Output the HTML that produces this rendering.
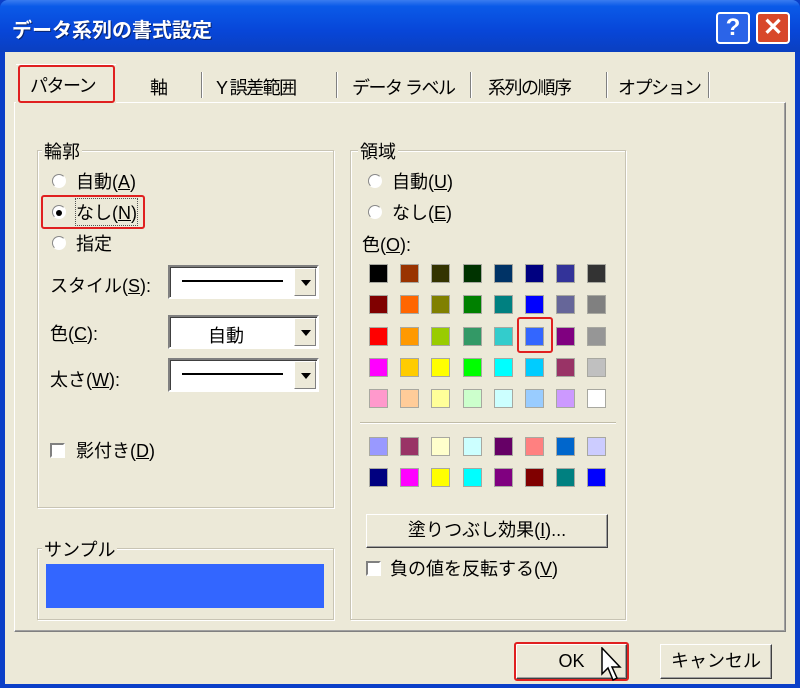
<!DOCTYPE html>
<html><head><meta charset="utf-8"><style>
*{box-sizing:border-box;margin:0;padding:0}
body{width:800px;height:688px;overflow:hidden;background:#0a3fc8;font-family:"Liberation Sans","Noto Sans CJK JP",sans-serif;font-size:18px;color:#000;position:relative}
.a{position:absolute}
#title{left:0;top:0;width:800px;height:52px;background:linear-gradient(#3a7cf0 0,#0a5ae8 12%,#0846d8 60%,#0a3fc0 100%);border-radius:8px 8px 0 0}
#body{left:5px;top:52px;width:790px;height:632px;background:#ece9d8}
.tb{color:#fff;font-weight:bold;font-size:20px;left:12px;top:14px;text-shadow:1px 1px #0a246a}
.btn{width:34px;height:32px;top:12px;border:2px solid #fff;border-radius:4px;color:#fff;font-weight:bold;font-size:24px;text-align:center;line-height:27px}
.grp{border:1px solid #c8c4b4;box-shadow:1px 1px 0 #fff inset,1px 1px 0 #fff}
.lbl{background:#ece9d8;padding:0 2px}
.rad{width:14px;height:14px;border-radius:50%;background:#fff;border:1px solid #a0a0a0;border-color:#888 #fff #fff #888}
.cb{width:15px;height:15px;background:#fff;border:2px solid;border-color:#808080 #fff #fff #808080}
.combo{background:#fff;border:2px solid;border-color:#808080 #fff #fff #808080;box-shadow:inset 1px 1px #404040}
.arr{position:absolute;right:1px;top:1px;bottom:1px;width:22px;background:#ece9d8;border:1px solid;border-color:#fff #808080 #808080 #fff}
.arr:after{content:"";position:absolute;left:6px;top:11px;border:5px solid transparent;border-top:6px solid #000}
.line{position:absolute;left:12px;right:34px;top:13px;height:2px;background:#000}
.pb{background:#ece9d8;border:1px solid;border-color:#fff #404040 #404040 #fff;box-shadow:inset -1px -1px #a0a0a0;text-align:center}
.grid{display:grid;grid-template-columns:repeat(8,31.2px);grid-auto-rows:31.3px}
.grid div{display:flex;align-items:center;justify-content:center}
.grid span{width:19px;height:19px;display:block;border:1px solid #a8a8a0}
.red{border:2px solid #e02020;border-radius:3px}
.sep{width:1px;height:26px;background:#808080;box-shadow:1px 0 #fff}
.tab{letter-spacing:-1.5px}
</style></head><body>
<div id="title" class="a"></div>
<div class="a tb">データ系列の書式設定</div>
<div class="a btn" style="left:716px;background:#2b64e8">?</div>
<div class="a btn" style="left:756px;background:#d8482a">✕</div>
<div id="body" class="a"></div>

<div class="a" style="left:14px;top:102px;width:772px;height:530px;border:1px solid;border-color:#fff #808080 #808080 #fff;box-shadow:inset -1px -1px #a0a0a0"></div>
<div class="a" style="left:16px;top:64px;width:100px;height:40px;background:#ece9d8;border-top:1px solid #fff"></div>
<div class="a red" style="left:18px;top:65px;width:97px;height:38px"></div>
<div class="a tab" style="left:30px;top:72px">パターン</div>
<div class="a tab" style="left:150px;top:74px">軸</div>
<div class="a sep" style="left:201px;top:72px"></div>
<div class="a tab" style="left:216px;top:74px">Y 誤差範囲</div>
<div class="a sep" style="left:336px;top:72px"></div>
<div class="a tab" style="left:352px;top:74px">データ ラベル</div>
<div class="a sep" style="left:470px;top:72px"></div>
<div class="a tab" style="left:488px;top:74px">系列の順序</div>
<div class="a sep" style="left:606px;top:72px"></div>
<div class="a tab" style="left:618px;top:74px">オプション</div>
<div class="a sep" style="left:708px;top:72px"></div>

<div class="a grp" style="left:37px;top:150px;width:297px;height:358px"></div>
<div class="a lbl" style="left:42px;top:138px">輪郭</div>
<div class="a rad" style="left:52px;top:174px"></div><div class="a" style="left:76px;top:168px">自動(<u>A</u>)</div>
<div class="a rad" style="left:52px;top:205px"></div><div class="a" style="left:56px;top:210px;width:6px;height:6px;background:#000;border-radius:50%"></div>
<div class="a" style="left:76px;top:199px;outline:1px dotted #555">なし(<u>N</u>)</div>
<div class="a red" style="left:41px;top:195px;width:104px;height:34px"></div>
<div class="a rad" style="left:52px;top:236px"></div><div class="a" style="left:76px;top:230px">指定</div>
<div class="a" style="left:50px;top:272px">スタイル(<u>S</u>):</div>
<div class="a combo" style="left:168px;top:265px;width:151px;height:34px"><div class="line"></div><div class="arr"></div></div>
<div class="a" style="left:50px;top:320px">色(<u>C</u>):</div>
<div class="a combo" style="left:168px;top:315px;width:151px;height:34px"><div style="position:absolute;left:38px;top:5px">自動</div><div class="arr"></div></div>
<div class="a" style="left:50px;top:366px">太さ(<u>W</u>):</div>
<div class="a combo" style="left:168px;top:358px;width:151px;height:34px"><div class="line"></div><div class="arr"></div></div>
<div class="a cb" style="left:50px;top:443px"></div><div class="a" style="left:76px;top:437px">影付き(<u>D</u>)</div>

<div class="a grp" style="left:37px;top:548px;width:297px;height:72px"></div>
<div class="a lbl" style="left:42px;top:536px">サンプル</div>
<div class="a" style="left:46px;top:564px;width:278px;height:44px;background:#3366ff"></div>

<div class="a grp" style="left:350px;top:150px;width:276px;height:470px"></div>
<div class="a lbl" style="left:358px;top:138px">領域</div>
<div class="a rad" style="left:368px;top:174px"></div><div class="a" style="left:392px;top:168px">自動(<u>U</u>)</div>
<div class="a rad" style="left:368px;top:205px"></div><div class="a" style="left:392px;top:199px">なし(<u>E</u>)</div>
<div class="a" style="left:362px;top:231px">色(<u>O</u>):</div>
<div class="a grid" style="left:363px;top:258px">
<div><span style="background:#000"></span></div><div><span style="background:#993300"></span></div><div><span style="background:#333300"></span></div><div><span style="background:#003300"></span></div><div><span style="background:#003366"></span></div><div><span style="background:#000080"></span></div><div><span style="background:#333399"></span></div><div><span style="background:#333333"></span></div>
<div><span style="background:#800000"></span></div><div><span style="background:#ff6600"></span></div><div><span style="background:#808000"></span></div><div><span style="background:#008000"></span></div><div><span style="background:#008080"></span></div><div><span style="background:#0000ff"></span></div><div><span style="background:#666699"></span></div><div><span style="background:#808080"></span></div>
<div><span style="background:#ff0000"></span></div><div><span style="background:#ff9900"></span></div><div><span style="background:#99cc00"></span></div><div><span style="background:#339966"></span></div><div><span style="background:#33cccc"></span></div><div><span style="background:#3366ff"></span></div><div><span style="background:#800080"></span></div><div><span style="background:#969696"></span></div>
<div><span style="background:#ff00ff"></span></div><div><span style="background:#ffcc00"></span></div><div><span style="background:#ffff00"></span></div><div><span style="background:#00ff00"></span></div><div><span style="background:#00ffff"></span></div><div><span style="background:#00ccff"></span></div><div><span style="background:#993366"></span></div><div><span style="background:#c0c0c0"></span></div>
<div><span style="background:#ff99cc"></span></div><div><span style="background:#ffcc99"></span></div><div><span style="background:#ffff99"></span></div><div><span style="background:#ccffcc"></span></div><div><span style="background:#ccffff"></span></div><div><span style="background:#99ccff"></span></div><div><span style="background:#cc99ff"></span></div><div><span style="background:#ffffff"></span></div>
</div>
<div class="a red" style="left:517px;top:317px;width:36px;height:36px"></div>
<div class="a" style="left:360px;top:422px;width:256px;height:2px;border-top:1px solid #c0bca8;border-bottom:1px solid #fff"></div>
<div class="a grid" style="left:363px;top:431px">
<div><span style="background:#9999ff"></span></div><div><span style="background:#993366"></span></div><div><span style="background:#ffffcc"></span></div><div><span style="background:#ccffff"></span></div><div><span style="background:#660066"></span></div><div><span style="background:#ff8080"></span></div><div><span style="background:#0066cc"></span></div><div><span style="background:#ccccff"></span></div>
<div><span style="background:#000080"></span></div><div><span style="background:#ff00ff"></span></div><div><span style="background:#ffff00"></span></div><div><span style="background:#00ffff"></span></div><div><span style="background:#800080"></span></div><div><span style="background:#800000"></span></div><div><span style="background:#008080"></span></div><div><span style="background:#0000ff"></span></div>
</div>
<div class="a pb" style="left:366px;top:514px;width:242px;height:34px;line-height:31px">塗りつぶし効果(<u>I</u>)...</div>
<div class="a cb" style="left:366px;top:561px"></div><div class="a" style="left:390px;top:555px">負の値を反転する(<u>V</u>)</div>

<div class="a pb" style="left:516px;top:644px;width:111px;height:35px;line-height:33px">OK</div>
<div class="a red" style="left:514px;top:642px;width:115px;height:39px"></div>
<svg class="a" style="left:600px;top:647px" width="26" height="38" viewBox="0 0 26 38"><path d="M2 1 L2 27 L8 21 L13 33 L17 31 L12 20 L20 20 Z" fill="#fff" stroke="#000" stroke-width="1.5"/></svg>
<div class="a pb" style="left:660px;top:644px;width:112px;height:35px;line-height:33px">キャンセル</div>
</body></html>
